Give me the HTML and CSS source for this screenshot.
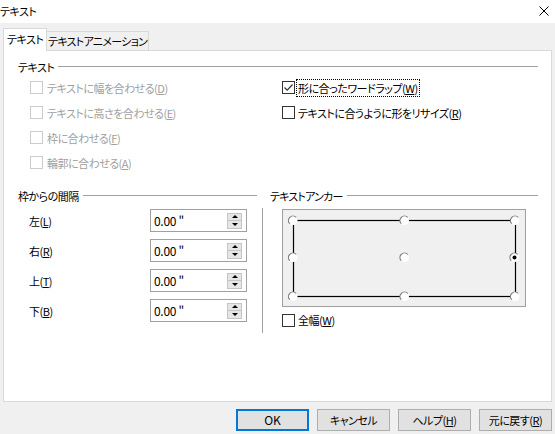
FILE: index.html
```html
<!DOCTYPE html>
<html lang="ja">
<head>
<meta charset="utf-8">
<title>テキスト</title>
<link rel="stylesheet" href="styles.css">
</head>
<body>
<div class="titlebar">
  <span class="title">テキスト</span>
  <svg class="close" width="10" height="10" viewBox="0 0 10 10"><path d="M0.5 0.5 L9.5 9.5 M9.5 0.5 L0.5 9.5" stroke="#000" stroke-width="1" fill="none"/></svg>
</div>
<div class="tabs">
  <div class="tab active">テキスト</div>
  <div class="tab">テキストアニメーション</div>
</div>
<div class="panel">
  <section class="group group-text">
    <div class="legend">テキスト</div>
    <div class="twocol">
      <div class="col col-left">
        <div class="check disabled"><span class="box"></span><span class="lbl">テキストに幅を合わせる(<u>D</u>)</span></div>
        <div class="check disabled"><span class="box"></span><span class="lbl">テキストに高さを合わせる(<u>E</u>)</span></div>
        <div class="check disabled"><span class="box"></span><span class="lbl">枠に合わせる(<u>F</u>)</span></div>
        <div class="check disabled"><span class="box"></span><span class="lbl">輪郭に合わせる(<u>A</u>)</span></div>
      </div>
      <div class="col col-right">
        <div class="check"><span class="box"><svg width="11" height="11" viewBox="0 0 11 11"><path d="M1.5 5.5 L4.2 8.2 L9.5 2.5" stroke="#333" stroke-width="1.2" fill="none"/></svg></span><span class="lbl focus">形に合ったワードラップ(<u>W</u>)</span></div>
        <div class="check"><span class="box"></span><span class="lbl">テキストに合うように形をリサイズ(<u>R</u>)</span></div>
      </div>
    </div>
  </section>
  <div class="bottom">
    <section class="group spacing">
      <div class="legend">枠からの間隔</div>
      <div class="spinrows">
        <div class="spinrow"><span class="slbl">左(<u>L</u>)</span><div class="spin"><span class="val">0.00 "</span><span class="spinbtn"><span class="up"></span><span class="down"></span></span></div></div>
        <div class="spinrow"><span class="slbl">右(<u>R</u>)</span><div class="spin"><span class="val">0.00 "</span><span class="spinbtn"><span class="up"></span><span class="down"></span></span></div></div>
        <div class="spinrow"><span class="slbl">上(<u>T</u>)</span><div class="spin"><span class="val">0.00 "</span><span class="spinbtn"><span class="up"></span><span class="down"></span></span></div></div>
        <div class="spinrow"><span class="slbl">下(<u>B</u>)</span><div class="spin"><span class="val">0.00 "</span><span class="spinbtn"><span class="up"></span><span class="down"></span></span></div></div>
      </div>
    </section>
    <div class="vsep"><span class="vline"></span></div>
    <section class="group anchor">
      <div class="legend">テキストアンカー</div>
      <div class="anchorbody">
        <div class="anchorbox">
          <svg width="242" height="96" viewBox="0 0 242 96">
            <rect x="10.5" y="10.5" width="222" height="76" fill="none" stroke="#000" stroke-width="1.2"/>
            <g transform="translate(10,10.5)"><circle r="4.5" fill="#fff"/><path d="M3.2 -3.2 A4.5 4.5 0 0 0 -3.2 3.2" stroke="#7a7a7a" stroke-width="1.2" fill="none"/></g>
            <g transform="translate(121.5,10.5)"><circle r="4.5" fill="#fff"/><path d="M3.2 -3.2 A4.5 4.5 0 0 0 -3.2 3.2" stroke="#7a7a7a" stroke-width="1.2" fill="none"/></g>
            <g transform="translate(232,10.5)"><circle r="4.5" fill="#fff"/><path d="M3.2 -3.2 A4.5 4.5 0 0 0 -3.2 3.2" stroke="#7a7a7a" stroke-width="1.2" fill="none"/></g>
            <g transform="translate(10,47.5)"><circle r="4.5" fill="#fff"/><path d="M3.2 -3.2 A4.5 4.5 0 0 0 -3.2 3.2" stroke="#7a7a7a" stroke-width="1.2" fill="none"/></g>
            <g transform="translate(121.5,47.5)"><circle r="4.5" fill="#fff"/><path d="M3.2 -3.2 A4.5 4.5 0 0 0 -3.2 3.2" stroke="#7a7a7a" stroke-width="1.2" fill="none"/></g>
            <g transform="translate(231.5,47.5)"><circle r="4.5" fill="#fff"/><path d="M3.2 -3.2 A4.5 4.5 0 0 0 -3.2 3.2" stroke="#7a7a7a" stroke-width="1.2" fill="none"/><circle r="2" fill="#000"/></g>
            <g transform="translate(10,86.5)"><circle r="4.5" fill="#fff"/><path d="M3.2 -3.2 A4.5 4.5 0 0 0 -3.2 3.2" stroke="#7a7a7a" stroke-width="1.2" fill="none"/></g>
            <g transform="translate(121.5,86.5)"><circle r="4.5" fill="#fff"/><path d="M3.2 -3.2 A4.5 4.5 0 0 0 -3.2 3.2" stroke="#7a7a7a" stroke-width="1.2" fill="none"/></g>
            <g transform="translate(232,86.5)"><circle r="4.5" fill="#fff"/><path d="M3.2 -3.2 A4.5 4.5 0 0 0 -3.2 3.2" stroke="#7a7a7a" stroke-width="1.2" fill="none"/></g>
          </svg>
        </div>
        <div class="check full"><span class="box"></span><span class="lbl">全幅(<u>W</u>)</span></div>
      </div>
    </section>
  </div>
</div>
<div class="buttons">
  <button class="btn default">OK</button>
  <button class="btn">キャンセル</button>
  <button class="btn">ヘルプ(<u>H</u>)</button>
  <button class="btn">元に戻す(<u>R</u>)</button>
</div>
</body>
</html>
```

FILE: styles.css
```css
* { box-sizing: border-box; }
html, body { margin: 0; padding: 0; }
body {
  width: 555px;
  height: 434px;
  overflow: hidden;
  background: #f0f0f0;
  color: #000;
  font-family: "Noto Sans CJK JP", "Noto Sans", sans-serif;
  font-size: 11px;
  line-height: 16px;
  letter-spacing: -0.5px;
  font-feature-settings: "palt";
}
u { text-decoration: underline; text-underline-offset: 1px; }

.titlebar {
  height: 23px;
  background: #fff;
  display: flex;
  align-items: center;
  justify-content: space-between;
  padding: 0 6px 1px 0;
}
.close { display: block; }

.tabs {
  height: 27px;
  display: flex;
  align-items: flex-end;
  padding-left: 3px;
}
.tab {
  height: 19px;
  width: 102px;
  border: 1px solid #d9d9d9;
  border-left: none;
  border-bottom: none;
  background: #f0f0f0;
  padding-left: 1px;
  line-height: 18px;
  white-space: nowrap;
  letter-spacing: -0.7px;
}
.tab.active {
  width: 44px;
  height: 23px;
  border-left: 1px solid #d9d9d9;
  background: #fff;
  margin-bottom: -1px;
  position: relative;
  z-index: 1;
  line-height: 20px;
  padding-left: 3px;
  letter-spacing: -0.5px;
}

.panel {
  margin-left: 3px;
  width: 549px;
  height: 352px;
  background: #fff;
  border: 1px solid #d9d9d9;
  padding: 8px 0 0 14px;
}

.legend {
  display: flex;
  align-items: center;
  height: 16px;
  white-space: nowrap;
}
.legend::after {
  content: "";
  flex: 1;
  border-top: 1px solid #a0a0a0;
  margin-left: 4px;
  margin-top: -1px;
}

.group-text { width: 520px; }
.twocol { display: flex; }
.col-left { width: 264px; padding-left: 12px; }
.col-right { flex: 1; }

.check {
  height: 25px;
  display: flex;
  align-items: center;
  white-space: nowrap;
}
.box {
  width: 13px;
  height: 13px;
  border: 1px solid #333;
  background: #fff;
  margin-right: 3px;
  display: flex;
  align-items: center;
  justify-content: center;
  flex: none;
}
.check.disabled .box { border-color: #cccccc; margin-right: 4px; }
.check.disabled .lbl { color: #a0a0a0; }
.lbl.focus { outline: 1px dotted #000; outline-offset: 0; padding: 0 1px; margin-left: -1px; }

.bottom {
  display: flex;
  margin-top: 13px;
}
.spacing { width: 239px; }
.spinrows {
  margin-top: 5px;
  display: flex;
  flex-direction: column;
  gap: 7px;
  padding-left: 11px;
}
.spinrow { display: flex; align-items: center; height: 23px; }
.slbl { width: 121px; }
.spin {
  width: 97px;
  height: 23px;
  border: 1px solid #a0a0a0;
  background: #fff;
  display: flex;
  align-items: center;
  justify-content: space-between;
  padding: 0 4px 0 3px;
}
.val { line-height: 16px; font-size: 12px; letter-spacing: -0.3px; }
.spinbtn {
  width: 15px;
  height: 16px;
  background: #e6e6e6;
  border: 1px solid #c4c4c4;
  display: flex;
  flex-direction: column;
}
.spinbtn .up, .spinbtn .down {
  flex: 1;
  display: flex;
  align-items: center;
  justify-content: center;
}
.spinbtn .up { border-bottom: 1px solid #c4c4c4; }
.spinbtn .up::before {
  content: "";
  border-left: 3px solid transparent;
  border-right: 3px solid transparent;
  border-bottom: 3px solid #000;
}
.spinbtn .down::before {
  content: "";
  border-left: 3px solid transparent;
  border-right: 3px solid transparent;
  border-top: 3px solid #000;
}

.vsep {
  width: 13px;
  padding: 20px 0 0 5px;
}
.vline {
  display: block;
  width: 1px;
  height: 125px;
  background: #a0a0a0;
}

.anchor { width: 268px; }
.anchor .legend { letter-spacing: -0.8px; }
.anchorbody { padding-left: 12px; margin-top: 5px; letter-spacing: -0.5px; }
.anchorbox {
  width: 244px;
  height: 98px;
  border: 1px solid #a0a0a0;
  background: #f0f0f0;
}
.anchorbox svg { display: block; }
.check.full { height: 16px; margin-top: 5px; }

.buttons {
  display: flex;
  justify-content: flex-end;
  gap: 8px;
  padding: 7px 3px 0 0;
}
.btn {
  width: 73px;
  height: 22px;
  background: #e1e1e1;
  border: 1px solid #adadad;
  font: inherit;
  letter-spacing: inherit;
  color: #000;
  padding: 0;
  margin: 0;
}
.btn.default { border: 2px solid #0078d7; font-size: 12px; letter-spacing: 0; }
```
